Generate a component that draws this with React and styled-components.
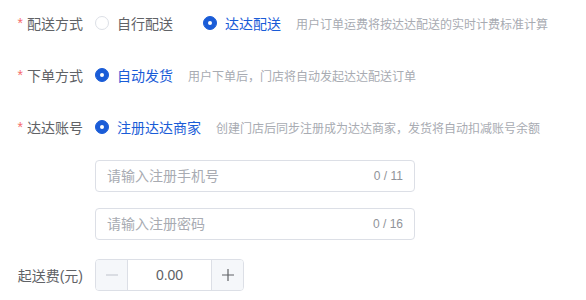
import styled, { createGlobalStyle } from "styled-components";

const GlobalStyle = createGlobalStyle`
  html, body {
    margin: 0;
    padding: 0;
    background: #ffffff;
    font-family: "Liberation Sans", "Noto Sans CJK SC", sans-serif;
  }
`;

const BLUE = "#1a5cd7";

const Form = styled.form`
  padding-top: 7px;
  display: flex;
  flex-direction: column;
`;

const FormItem = styled.div`
  display: flex;
  align-items: flex-start;
  margin-bottom: ${(p) => p.$gap ?? 20}px;
`;

const Label = styled.label`
  width: 95px;
  box-sizing: border-box;
  padding-right: 12px;
  height: 32px;
  display: flex;
  align-items: center;
  justify-content: flex-end;
  font-size: 14px;
  color: #606266;
  flex-shrink: 0;
`;

const Star = styled.span`
  color: #f56c6c;
  margin-right: 4px;
  font-size: 14px;
`;

const Content = styled.div`
  display: flex;
  flex-direction: column;
`;

const Line = styled.div`
  height: 32px;
  display: flex;
  align-items: center;
`;

const Radio = styled.span`
  display: inline-flex;
  align-items: center;
  gap: 8px;
  margin-right: ${(p) => (p.$last ? 15 : 30)}px;
  font-size: 14px;
  color: ${(p) => (p.$checked ? BLUE : "#606266")};
  white-space: nowrap;
`;

const Dot = styled.span`
  width: 14px;
  height: 14px;
  box-sizing: border-box;
  border-radius: 50%;
  border: 1px solid ${(p) => (p.$checked ? BLUE : "#dcdfe6")};
  background: ${(p) => (p.$checked ? BLUE : "#ffffff")};
  display: inline-flex;
  align-items: center;
  justify-content: center;

  &::after {
    content: "";
    width: 4px;
    height: 4px;
    border-radius: 50%;
    background: #ffffff;
    display: ${(p) => (p.$checked ? "block" : "none")};
  }
`;

const Hint = styled.span`
  font-size: 12px;
  color: #a8abb2;
  white-space: nowrap;
`;

const InputBox = styled.div`
  width: 320px;
  height: 32px;
  box-sizing: border-box;
  border: 1px solid #dcdfe6;
  border-radius: 4px;
  display: flex;
  align-items: center;
  padding: 0 11px;
  margin-top: ${(p) => p.$top}px;
`;

const Field = styled.input`
  flex: 1;
  border: none;
  outline: none;
  font-family: inherit;
  font-size: 14px;
  color: #606266;
  padding: 0;
  background: transparent;

  &::placeholder {
    color: #a8abb2;
  }
`;

const Count = styled.span`
  font-size: 12px;
  color: #909399;
  white-space: nowrap;
`;

const Stepper = styled.div`
  width: 149px;
  height: 32px;
  box-sizing: border-box;
  border: 1px solid #dcdfe6;
  border-radius: 4px;
  display: flex;
  overflow: hidden;
`;

const StepButton = styled.span`
  width: 31px;
  background: #f5f7fa;
  display: flex;
  align-items: center;
  justify-content: center;
  color: ${(p) => (p.$disabled ? "#c0c4cc" : "#606266")};
  font-size: 18px;
  border-left: ${(p) => (p.$side === "right" ? "1px solid #dcdfe6" : "none")};
  border-right: ${(p) => (p.$side === "left" ? "1px solid #dcdfe6" : "none")};
`;

const StepValue = styled.span`
  flex: 1;
  display: flex;
  align-items: center;
  justify-content: center;
  font-size: 14px;
  color: #606266;
`;

function RadioOption({ checked, last, children }) {
  return (
    <Radio $checked={checked} $last={last}>
      <Dot $checked={checked} />
      {children}
    </Radio>
  );
}

function Minus() {
  return (
    <svg width="14" height="14" viewBox="0 0 14 14">
      <path d="M1 7h12" stroke="currentColor" strokeWidth="1.2" />
    </svg>
  );
}

function Plus() {
  return (
    <svg width="14" height="14" viewBox="0 0 14 14">
      <path d="M1 7h12M7 1v12" stroke="currentColor" strokeWidth="1.2" />
    </svg>
  );
}

export default function App() {
  return (
    <>
      <GlobalStyle />
      <Form>
        <FormItem>
          <Label>
            <Star>*</Star>配送方式
          </Label>
          <Line>
            <RadioOption>自行配送</RadioOption>
            <RadioOption checked last>
              达达配送
            </RadioOption>
            <Hint>用户订单运费将按达达配送的实时计费标准计算</Hint>
          </Line>
        </FormItem>

        <FormItem>
          <Label>
            <Star>*</Star>下单方式
          </Label>
          <Line>
            <RadioOption checked last>
              自动发货
            </RadioOption>
            <Hint>用户下单后，门店将自动发起达达配送订单</Hint>
          </Line>
        </FormItem>

        <FormItem $gap={19}>
          <Label>
            <Star>*</Star>达达账号
          </Label>
          <Content>
            <Line>
              <RadioOption checked last>
                注册达达商家
              </RadioOption>
              <Hint>创建门店后同步注册成为达达商家，发货将自动扣减账号余额</Hint>
            </Line>
            <InputBox $top={17}>
              <Field placeholder="请输入注册手机号" />
              <Count>0 / 11</Count>
            </InputBox>
            <InputBox $top={16}>
              <Field placeholder="请输入注册密码" />
              <Count>0 / 16</Count>
            </InputBox>
          </Content>
        </FormItem>

        <FormItem>
          <Label>起送费(元)</Label>
          <Stepper>
            <StepButton $side="left" $disabled>
              <Minus />
            </StepButton>
            <StepValue>0.00</StepValue>
            <StepButton $side="right">
              <Plus />
            </StepButton>
          </Stepper>
        </FormItem>
      </Form>
    </>
  );
}
